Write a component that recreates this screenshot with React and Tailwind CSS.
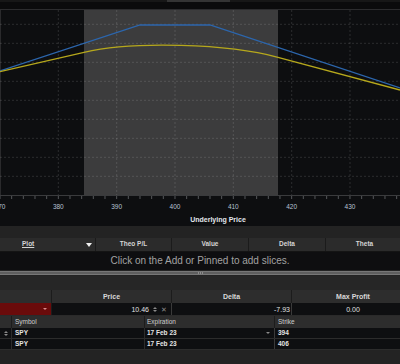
import React from 'react';

const gridX = [58.3, 116.7, 175, 233.3, 291.7, 350];
const gridY = [14.3, 33.3, 52.3, 71.3, 90.3, 109.3, 128.3, 147.3, 166.3];
const ticks = [370, 380, 390, 400, 410, 420, 430];

function PayoffChart() {
  const minor = [];
  for (let i = 0; i <= 35; i++) minor.push(i * 11.666);

  return (
    <svg width="400" height="202" viewBox="0 0 400 202" className="block">
      <rect x="0" y="0" width="400" height="186" fill="#0d0e10" />
      <rect x="84" y="0" width="194" height="186" fill="#3c3c3d" />
      <line x1="0.5" y1="0" x2="0.5" y2="186" stroke="#2a2a2c" />
      {gridX.map(x => (
        <line key={'v' + x} x1={x} y1="0" x2={x} y2="186" stroke="rgba(255,255,255,0.13)" strokeDasharray="2 2" />
      ))}
      {gridY.map(y => (
        <line key={'h' + y} x1="0" y1={y} x2="400" y2={y} stroke="rgba(255,255,255,0.13)" strokeDasharray="2 2" />
      ))}
      <line x1="0" y1="185.5" x2="400" y2="185.5" stroke="#3a3b3d" />
      {minor.map(x => (
        <line key={'t' + x} x1={x} y1="186" x2={x} y2="189" stroke="#55575a" />
      ))}
      <polyline
        points="0,61 140,15 210,15 400,78"
        fill="none"
        stroke="#2c66ad"
        strokeWidth="1.3"
      />
      <path
        d="M0,61.7 L84,42.3 C134,30.75 228,33.9 278,47.3 L400,80"
        fill="none"
        stroke="#b6a81c"
        strokeWidth="1.3"
      />
      {ticks.map((t, i) => (
        <text
          key={t}
          x={i * 58.33}
          y="199"
          textAnchor="middle"
          fill="#b7c2d2"
          fontSize="6.5"
          fontFamily="'Liberation Sans', Arial, sans-serif"
        >
          {t}
        </text>
      ))}
    </svg>
  );
}

function Spinner() {
  return (
    <div className="flex flex-col items-center gap-[1px]">
      <div className="w-0 h-0 border-l-[2px] border-r-[2px] border-b-[2px] border-transparent border-b-[#8a8a8a]" />
      <div className="w-0 h-0 border-l-[2px] border-r-[2px] border-t-[2px] border-transparent border-t-[#8a8a8a]" />
    </div>
  );
}

export default function App() {
  return (
    <div className="w-[400px] h-[364px] overflow-hidden bg-[#232323] font-['Liberation_Sans',Arial,sans-serif] leading-none select-none">
      {/* top strip */}
      <div className="h-[2px] bg-[#171717] flex">
        <div className="ml-[167px] w-[63px] bg-[#343434]" />
      </div>
      <div className="h-[7px] bg-[#0b0b0c]" />
      <div className="h-px bg-[#2c2c2e]" />

      {/* chart */}
      <div className="bg-[#0d0e10]">
        <PayoffChart />
        <div className="h-[14px] flex items-center justify-center pl-[36px] text-[7px] font-bold text-[#e2e6ec]">
          Underlying Price
        </div>
      </div>

      {/* slices panel */}
      <div className="h-[12px] bg-[#232323]" />
      <div className="flex h-[14px] w-[420px] bg-[#2b2b2b] border-b border-[#141414] text-[6.5px] font-bold text-[#d4d4d4]">
        <div className="w-[96px] flex items-center pl-[22px] pr-[3px] border-r border-[#1b1b1b]">
          <span className="underline">Plot</span>
          <div className="ml-auto w-0 h-0 border-l-[3px] border-r-[3px] border-t-[4px] border-transparent border-t-[#f0f0f0]" />
        </div>
        <div className="w-[76px] flex items-center justify-center border-r border-[#1b1b1b]">Theo P/L</div>
        <div className="w-[77px] flex items-center justify-center border-r border-[#1b1b1b]">Value</div>
        <div className="w-[77px] flex items-center justify-center border-r border-[#1b1b1b]">Delta</div>
        <div className="w-[77px] flex items-center justify-center">Theta</div>
      </div>
      <div className="h-[18px] bg-[#0e0e10] flex items-center justify-center text-[10px] text-[#a2a2a2]">
        Click on the Add or Pinned to add slices.
      </div>
      <div className="h-[6px] bg-[#232323] flex flex-col justify-center">
        <div className="h-[4px] bg-[#5e5e5e] border-y border-[#777] flex items-center justify-center gap-[1px]">
          <div className="w-px h-[2px] bg-[#8c8c8c]" />
          <div className="w-px h-[2px] bg-[#8c8c8c]" />
          <div className="w-px h-[2px] bg-[#8c8c8c]" />
        </div>
      </div>
      <div className="h-[14px] bg-[#262626]" />

      {/* order table */}
      <div className="flex h-[13px] w-[414px] bg-[#2d2d2d] text-[7px] font-bold text-[#d8d8d8]">
        <div className="w-[52px] border-r border-[#1c1c1c]" />
        <div className="w-[120px] flex items-center justify-center border-r border-[#1c1c1c]">Price</div>
        <div className="w-[120px] flex items-center justify-center border-r border-[#1c1c1c]">Delta</div>
        <div className="w-[122px] flex items-center justify-center">Max Profit</div>
      </div>
      <div className="flex h-[13px] w-[414px] bg-[#0e0f11] border-b border-[#2a2a2a] text-[7px] text-[#e0e0e0]">
        <div className="w-[52px] bg-[#6a0b0b] flex items-center justify-end pr-[4px] border-r border-[#1c1c1c]">
          <div className="w-0 h-0 border-l-[2px] border-r-[2px] border-t-[2px] border-transparent border-t-[#d88a8a]" />
        </div>
        <div className="w-[120px] flex items-center justify-end gap-[4px] pr-[4px] border-r border-[#3a3a3a]">
          <span>10.46</span>
          <Spinner />
          <span className="text-[#8a8a8a] text-[7px]">✕</span>
        </div>
        <div className="w-[120px] flex items-center justify-end pr-[1px] border-r border-[#3a3a3a]">-7.93</div>
        <div className="w-[122px] flex items-center justify-center">0.00</div>
      </div>

      <div className="flex h-[12px] w-[414px] bg-[#2d2d2d] text-[6.5px] text-[#cfcfcf]">
        <div className="w-[12px] border-r border-[#1c1c1c]" />
        <div className="w-[133px] flex items-center pl-[3px] border-r border-[#1c1c1c]">Symbol</div>
        <div className="w-[130px] flex items-center pl-[2px] border-r border-[#1c1c1c]">Expiration</div>
        <div className="flex-1 flex items-center pl-[3px]">Strike</div>
      </div>
      <div className="flex h-[11px] w-[414px] bg-[#0e0f11] border-b border-[#2c2c2c] text-[6.5px] font-bold text-[#e4e4e4]">
        <div className="w-[12px] flex items-center justify-center border-r border-[#2c2c2c]">
          <Spinner />
        </div>
        <div className="w-[133px] flex items-center pl-[3px] border-r border-[#2c2c2c]">SPY</div>
        <div className="w-[130px] flex items-center pl-[2px] pr-[4px] border-r border-[#3a3a3a]">
          <span>17 Feb 23</span>
          <div className="ml-auto w-0 h-0 border-l-[2px] border-r-[2px] border-t-[2px] border-transparent border-t-[#8a8a8a]" />
        </div>
        <div className="flex-1 flex items-center pl-[3px]">394</div>
      </div>
      <div className="flex h-[11px] w-[414px] bg-[#0e0f11] border-b border-[#2c2c2c] text-[6.5px] font-bold text-[#e4e4e4]">
        <div className="w-[12px] border-r border-[#2c2c2c]" />
        <div className="w-[133px] flex items-center pl-[3px] border-r border-[#2c2c2c]">SPY</div>
        <div className="w-[130px] flex items-center pl-[2px] border-r border-[#3a3a3a]">17 Feb 23</div>
        <div className="flex-1 flex items-center pl-[3px]">406</div>
      </div>
      <div className="flex-1 bg-[#232323]" />
    </div>
  );
}
